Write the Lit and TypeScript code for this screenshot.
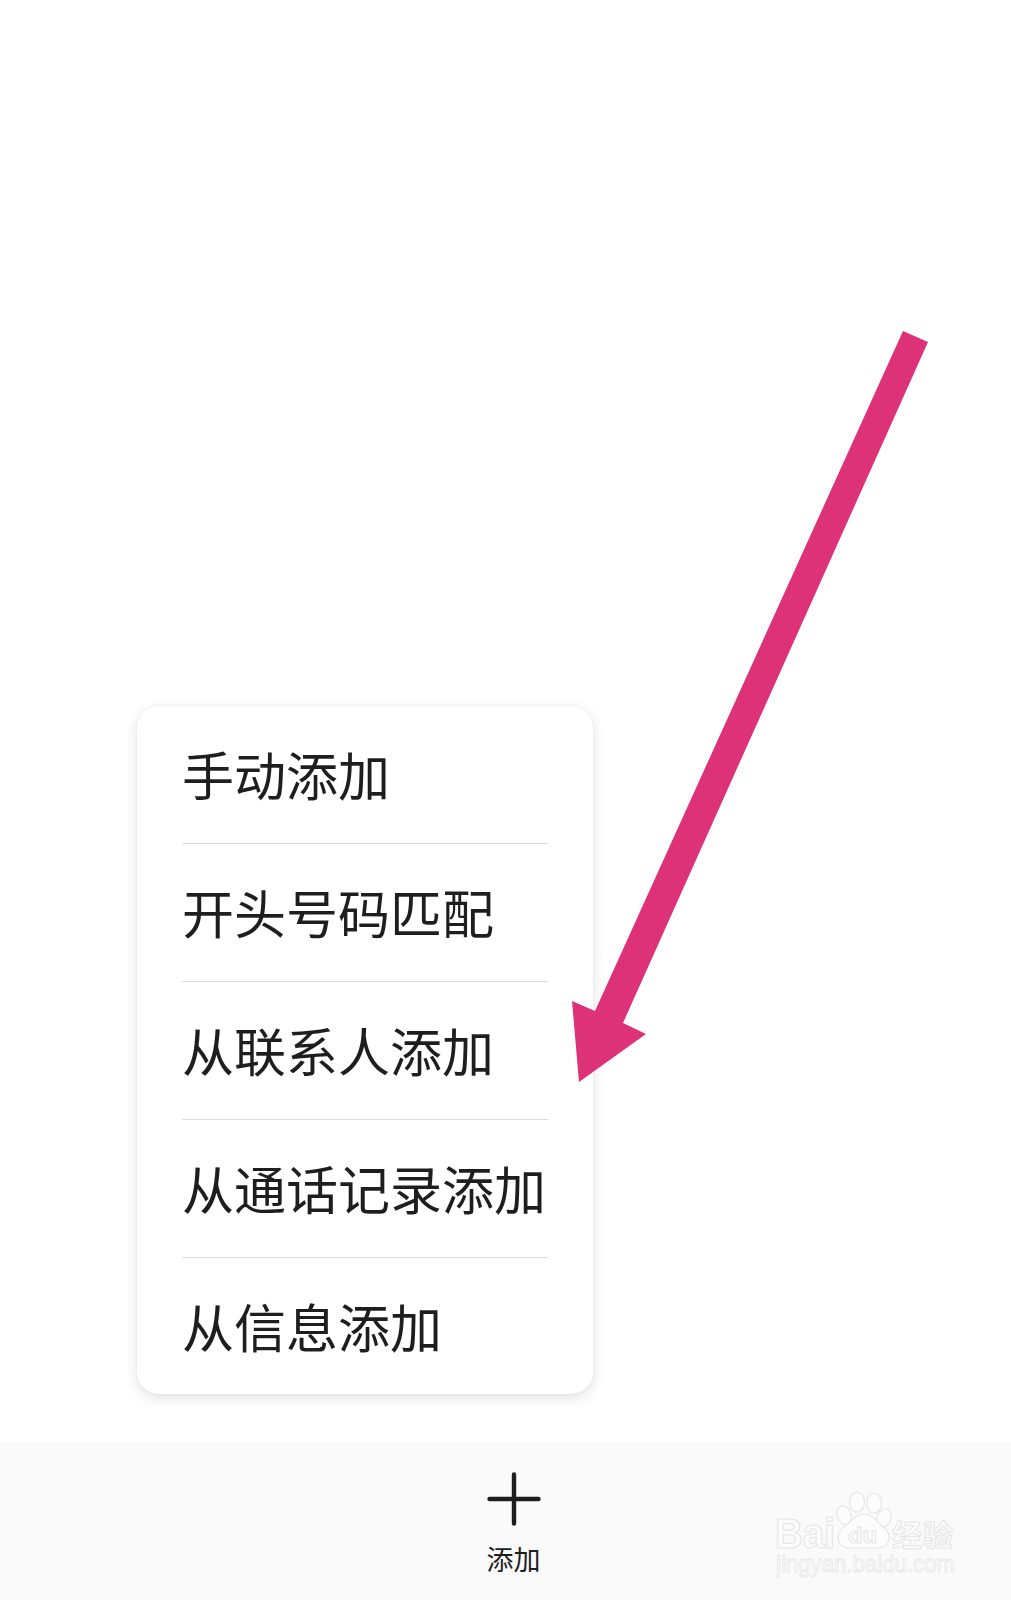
import { LitElement, html, css, svg } from "lit";
import { customElement } from "lit/decorators.js";

const ITEMS = ["手动添加", "开头号码匹配", "从联系人添加", "从通话记录添加", "从信息添加"];

@customElement("app-root")
export class AppRoot extends LitElement {
  static styles = css`
    :host {
      display: block;
      width: 1011px;
      height: 1600px;
      position: relative;
      overflow: hidden;
      background: #fff;
      font-family: "Noto Sans CJK SC", "Noto Sans", sans-serif;
      color: #1e1e1e;
    }
    .page { display: flex; flex-direction: column; height: 100%; }
    .main {
      flex: 1;
      display: flex;
      flex-direction: column;
      justify-content: flex-end;
      align-items: flex-start;
      padding: 0 0 48px 137px;
    }
    .menu {
      width: 456px;
      background: #fff;
      border-radius: 22px;
      box-shadow: 0 4px 14px rgba(0, 0, 0, 0.12), 0 0 3px rgba(0, 0, 0, 0.05);
      padding: 0 45px;
      box-sizing: border-box;
    }
    .item {
      height: 135px;
      padding-bottom: 2px;
      display: flex;
      align-items: center;
      font-size: 52px;
      line-height: 1;
      white-space: nowrap;
      border-bottom: 1px solid #dcdcdc;
    }
    .item:last-child { border-bottom: 0; height: 136px; padding-bottom: 0; }
    .bar {
      height: 158px;
      background: #fafafa;
      display: flex;
      flex-direction: column;
      align-items: center;
      box-sizing: border-box;
      padding-top: 30px;
      padding-left: 16px;
    }
    .plus { display: block; width: 54px; height: 54px; }
    .label { font-size: 27px; line-height: 30px; margin-top: 18px; color: #1e1e1e; }
    .overlay { position: absolute; inset: 0; width: 1011px; height: 1600px; pointer-events: none; }
    .wm-big { font-family: "Liberation Sans", sans-serif; font-weight: 700; font-size: 43px; fill: #fcfcfc; stroke: #e6e6e6; stroke-width: 1.2; }
    .wm-cn { font-family: "Noto Sans CJK SC", sans-serif; font-weight: 700; font-size: 30px; fill: #fcfcfc; stroke: #e6e6e6; stroke-width: 1; }
    .wm-du { font-family: "Liberation Sans", sans-serif; font-weight: 700; font-size: 22px; fill: #fcfcfc; stroke: #e6e6e6; stroke-width: 1; }
    .wm-url { font-family: "Liberation Sans", sans-serif; font-size: 24px; fill: #fcfcfc; stroke: #e8e8e8; stroke-width: 0.9; }
    .paw { fill: #fcfcfc; stroke: #e6e6e6; stroke-width: 1.2; }
  `;

  render() {
    return html`
      <div class="page">
        <div class="main">
          <div class="menu">
            ${ITEMS.map((t) => html`<div class="item">${t}</div>`)}
          </div>
        </div>
        <div class="bar">
          <svg class="plus" viewBox="0 0 54 54" aria-hidden="true">
            <path d="M2.5 27H51.5M27 2.5V51.5" fill="none" stroke="#1e1e1e" stroke-width="4.4" stroke-linecap="round" />
          </svg>
          <div class="label">添加</div>
        </div>
      </div>
      <svg class="overlay" viewBox="0 0 1011 1600" aria-hidden="true">
        <polygon points="903,331 928,342 623,1023 646,1034 579,1082 572,1001 595,1011" fill="#dd3278" />
        ${svg`
          <text class="wm-big" x="775" y="1548" textLength="60" lengthAdjust="spacingAndGlyphs">Bai</text>
          <ellipse class="paw" cx="857" cy="1502" rx="7.5" ry="10" />
          <ellipse class="paw" cx="874" cy="1503" rx="7.5" ry="10" />
          <ellipse class="paw" cx="844" cy="1515" rx="7" ry="9.5" transform="rotate(-20 844 1515)" />
          <ellipse class="paw" cx="884" cy="1518" rx="7" ry="9.5" transform="rotate(20 884 1518)" />
          <path class="paw" d="M864 1514c9 0 13 8 20 14c9 7 6 20-7 20h-27c-13 0-15-13-7-20c8-6 12-14 21-14z" />
          <text class="wm-du" x="848" y="1543" textLength="29" lengthAdjust="spacingAndGlyphs">du</text>
          <text class="wm-cn" x="892" y="1546" textLength="61">经验</text>
          <text class="wm-url" x="776" y="1572" textLength="179" lengthAdjust="spacingAndGlyphs">jingyan.baidu.com</text>
        `}
      </svg>
    `;
  }
}
